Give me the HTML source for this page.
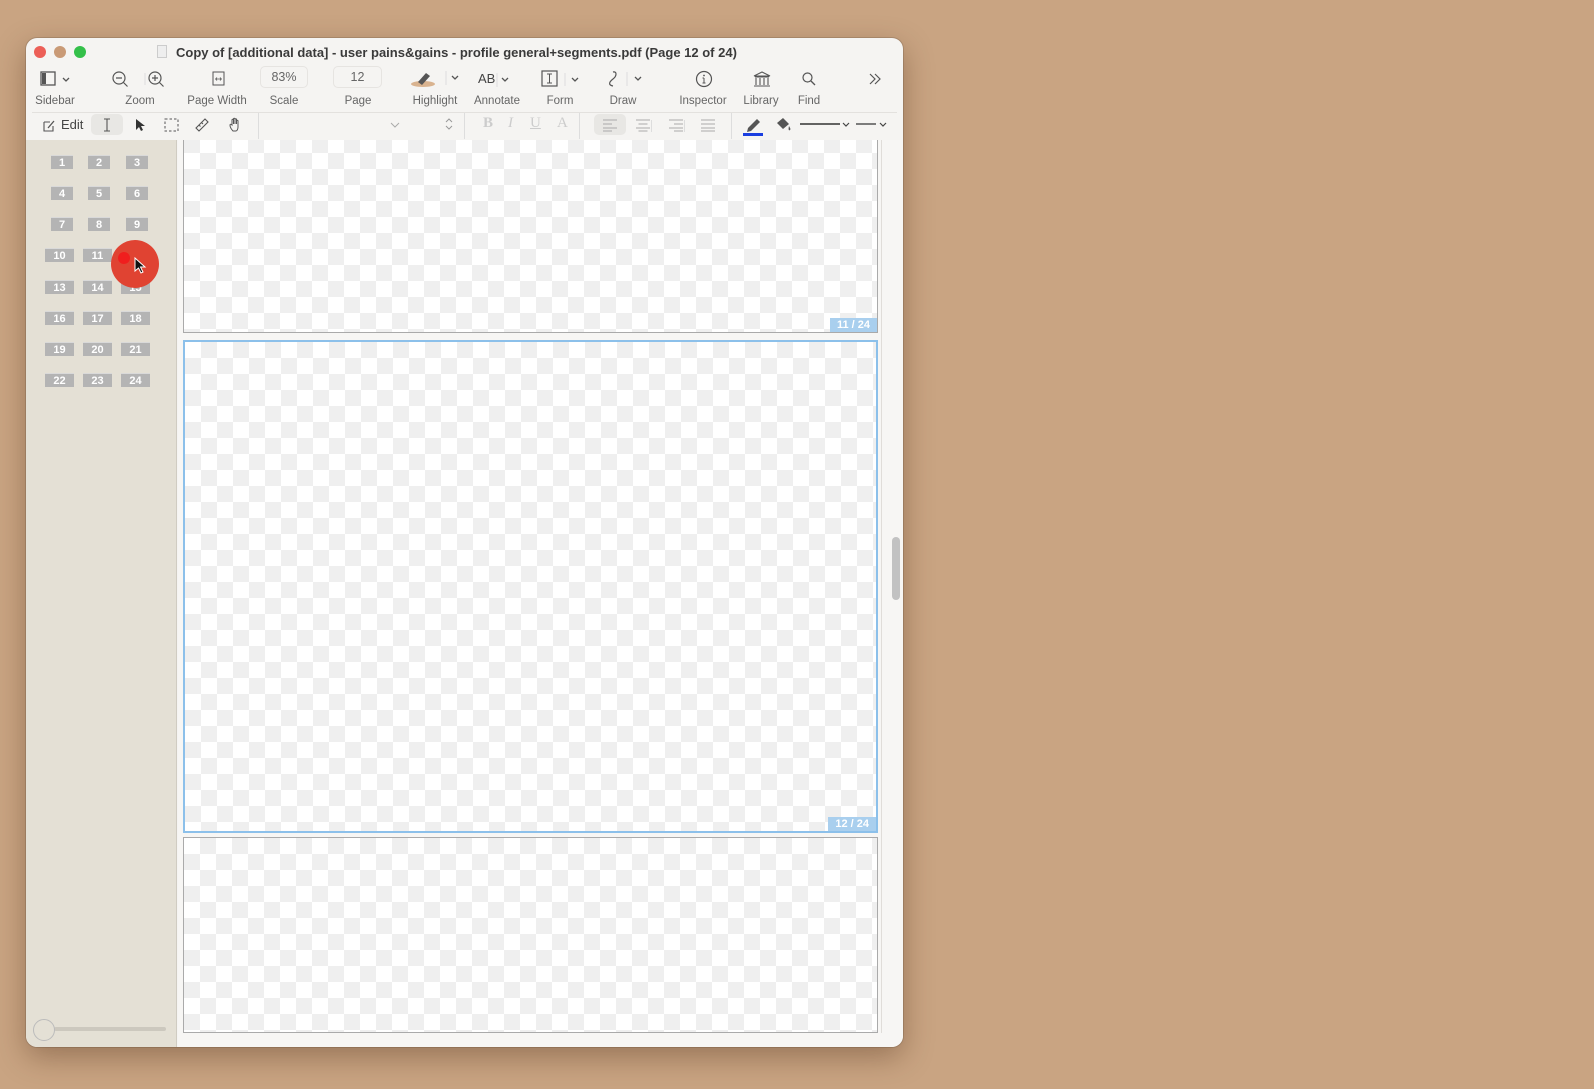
<!DOCTYPE html>
<html><head><meta charset="utf-8"><style>
*{margin:0;padding:0;box-sizing:border-box}
body{width:1594px;height:1089px;background:#c9a482;position:relative;overflow:hidden;font-family:"Liberation Sans",sans-serif}
.win{position:absolute;left:26px;top:38px;width:877px;height:1009px;background:#f5f4f2;border-radius:11px;overflow:hidden;box-shadow:0 10px 30px rgba(60,30,10,.35),0 0 0 1px rgba(0,0,0,.12)}
.a{position:absolute}
.lbl{position:absolute;top:57px;font-size:11.5px;color:#666;transform:translateX(-50%);white-space:nowrap}
.sidebar{position:absolute;left:0;top:102px;width:151px;height:907px;background:#e4e0d5;border-right:1px solid #d0ccc2}
.th{position:absolute;height:14px;background:#b4b4b4;color:#fff;font-size:11px;font-weight:bold;text-align:center;line-height:14px;border-top:1px solid #d9d9d9}
.content{position:absolute;left:152px;top:102px;width:725px;height:907px;overflow:hidden;background:#f7f6f4}
.page{position:absolute;left:5px;width:695px;background-color:#fff;background-image:linear-gradient(45deg,#efefef 25%,transparent 25%,transparent 75%,#efefef 75%),linear-gradient(45deg,#efefef 25%,transparent 25%,transparent 75%,#efefef 75%);background-size:32px 32px;background-position:0 0,16px 16px;border:1px solid #aaa}
.pl{position:absolute;right:0;bottom:0;background:#a9cfee;color:#fff;font-size:11px;font-weight:bold;padding:0 7px;height:14px;line-height:14px}
</style></head><body>
<div class="win">
 <div class="a" style="left:8px;top:8px;width:12px;height:12px;border-radius:50%;background:#ec5f57"></div>
 <div class="a" style="left:28px;top:8px;width:12px;height:12px;border-radius:50%;background:#c99a76"></div>
 <div class="a" style="left:48px;top:8px;width:12px;height:12px;border-radius:50%;background:#34c04a"></div>
 <div class="a" style="left:131px;top:7px;width:10px;height:13px;background:#eee;border:1px solid #ccc"></div>
 <div class="a" style="left:150px;top:7px;font-size:13px;font-weight:bold;color:#3a3a3a;white-space:nowrap">Copy of [additional data] - user pains&amp;gains - profile general+segments.pdf (Page 12 of 24)</div>

 <svg class="a" style="left:14px;top:32px" width="36" height="18"><rect x="1" y="2" width="14" height="13" fill="none" stroke="#555" stroke-width="1.3"/><rect x="2" y="3" width="4" height="11" fill="#555"/><path d="M23 8l3 3 3-3" fill="none" stroke="#555" stroke-width="1.3"/></svg>
 <svg class="a" style="left:85px;top:32px" width="60" height="18"><circle cx="8" cy="8" r="6" fill="none" stroke="#555" stroke-width="1.2"/><path d="M5 8h6M12.5 12.5l4 4" stroke="#555" stroke-width="1.2"/><path d="M34 3v12" stroke="#ddd"/><circle cx="44" cy="8" r="6" fill="none" stroke="#555" stroke-width="1.2"/><path d="M41 8h6M44 5v6M48.5 12.5l4 4" stroke="#555" stroke-width="1.2"/></svg>
 <svg class="a" style="left:186px;top:33px" width="14" height="16"><rect x="1" y="1" width="11" height="13" fill="none" stroke="#555"/><path d="M3.5 8h6M3.5 8l1.5-1.5M3.5 8l1.5 1.5M9.5 8l-1.5-1.5M9.5 8l-1.5 1.5" stroke="#555" stroke-width=".8"/></svg>
 <div class="a" style="left:234px;top:28px;width:48px;height:22px;border:1px solid #e6e4e1;border-radius:5px;font-size:12.5px;color:#666;text-align:center;line-height:20px">83%</div>
 <div class="a" style="left:307px;top:28px;width:49px;height:22px;border:1px solid #e6e4e1;border-radius:5px;font-size:12.5px;color:#666;text-align:center;line-height:20px">12</div>
 <svg class="a" style="left:384px;top:30px" width="60" height="20"><ellipse cx="13" cy="16" rx="12" ry="3" fill="#d9b38f"/><path d="M8 14l8-9 4 3-8 9z" fill="#555"/><path d="M36 3v14" stroke="#ddd"/><path d="M42 8l3 3 3-3" fill="none" stroke="#555" stroke-width="1.3"/></svg>
 <div class="a" style="left:452px;top:33px;font-size:13px;color:#444">AB</div>
 <svg class="a" style="left:466px;top:32px" width="20" height="18"><path d="M5 3v14" stroke="#ddd"/><path d="M10 8l3 3 3-3" fill="none" stroke="#555" stroke-width="1.3"/></svg>
 <svg class="a" style="left:515px;top:32px" width="42" height="18"><rect x="1" y="1" width="15" height="15" fill="none" stroke="#555" stroke-width="1.2"/><path d="M6 4h5M8.5 4v9M6 13h5" stroke="#555"/><path d="M24 3v13" stroke="#ddd"/><path d="M31 8l3 3 3-3" fill="none" stroke="#555" stroke-width="1.3"/></svg>
 <svg class="a" style="left:576px;top:31px" width="46" height="20"><path d="M11 3c4-1 4 4 0 7s-5 6 0 7" fill="none" stroke="#555" stroke-width="1.2"/><path d="M25 3v14" stroke="#ddd"/><path d="M33 8l3 3 3-3" fill="none" stroke="#555" stroke-width="1.3"/></svg>
 <svg class="a" style="left:669px;top:32px" width="18" height="18"><circle cx="9" cy="9" r="7.5" fill="none" stroke="#555" stroke-width="1.2"/><path d="M9 8v5M7.5 13h3M7.5 8h1.5" stroke="#555"/><circle cx="9" cy="5.5" r=".9" fill="#555"/></svg>
 <svg class="a" style="left:726px;top:32px" width="20" height="18"><path d="M2 6l8-4 8 4zM3 7h14M4 8v7M8 8v7M12 8v7M16 8v7M2 16h16" fill="none" stroke="#555" stroke-width="1.1"/></svg>
 <svg class="a" style="left:775px;top:33px" width="16" height="16"><circle cx="6.5" cy="6.5" r="4.5" fill="none" stroke="#555" stroke-width="1.2"/><path d="M10 10l4 4" stroke="#555" stroke-width="1.3"/></svg>
 <svg class="a" style="left:842px;top:34px" width="14" height="14"><path d="M2 2l5 5-5 5M7 2l5 5-5 5" fill="none" stroke="#555" stroke-width="1.2"/></svg>

 <div class="lbl" style="left:29px">Sidebar</div>
 <div class="lbl" style="left:114px">Zoom</div>
 <div class="lbl" style="left:191px">Page Width</div>
 <div class="lbl" style="left:258px">Scale</div>
 <div class="lbl" style="left:332px">Page</div>
 <div class="lbl" style="left:409px">Highlight</div>
 <div class="lbl" style="left:471px">Annotate</div>
 <div class="lbl" style="left:534px">Form</div>
 <div class="lbl" style="left:597px">Draw</div>
 <div class="lbl" style="left:677px">Inspector</div>
 <div class="lbl" style="left:735px">Library</div>
 <div class="lbl" style="left:783px">Find</div>

 <div class="a" style="left:6px;top:74px;width:865px;height:1px;background:#e3e1de"></div>
 <svg class="a" style="left:15px;top:80px" width="16" height="16"><path d="M3 4h6M3 4v9h9V8" fill="none" stroke="#555" stroke-width="1.1"/><path d="M7 10l6-7" stroke="#555" stroke-width="1.3"/></svg>
 <div class="a" style="left:35px;top:79px;font-size:13px;color:#444">Edit</div>
 <div class="a" style="left:65px;top:76px;width:32px;height:21px;background:#e8e7e4;border-radius:5px"></div>
 <svg class="a" style="left:75px;top:79px" width="12" height="16"><path d="M3 2h6M6 2v12M3 14h6" stroke="#555" stroke-width="1.1"/></svg>
 <svg class="a" style="left:108px;top:80px" width="12" height="14"><path d="M2 1v11l3-3 2 4 2-1-2-4h4z" fill="#333"/></svg>
 <svg class="a" style="left:138px;top:80px" width="16" height="14"><rect x="1" y="1" width="13" height="12" fill="none" stroke="#555" stroke-dasharray="2.5 2"/></svg>
 <svg class="a" style="left:168px;top:79px" width="16" height="16"><path d="M2 11l9-9 3 3-9 9z M5 8l1.5 1.5M7.5 5.5L9 7" fill="none" stroke="#555" stroke-width="1.1"/></svg>
 <svg class="a" style="left:202px;top:79px" width="16" height="16"><path d="M5 14c-2-2-3-4-3-6 0-1 1-1 2 0V3c0-1 1.5-1 1.5 0v4V2c0-1 1.5-1 1.5 0v5V2.5c0-1 1.5-1 1.5 0V7V4c0-1 1.5-1 1.5 0v6c0 2-1 4-2 4z" fill="none" stroke="#555" stroke-width="1"/></svg>
 <div class="a" style="left:232px;top:75px;width:1px;height:26px;background:#ddd"></div>
 <svg class="a" style="left:364px;top:83px" width="10" height="8"><path d="M1 2l4 4 4-4" fill="none" stroke="#aaa"/></svg>
 <svg class="a" style="left:419px;top:80px" width="8" height="12"><path d="M1 4l3-3 3 3M1 8l3 3 3-3" fill="none" stroke="#999"/></svg>
 <div class="a" style="left:438px;top:75px;width:1px;height:26px;background:#ddd"></div>
 <div class="a" style="left:457px;top:77px;font-size:15px;font-weight:bold;color:#ccc;font-family:'Liberation Serif',serif">B</div>
 <div class="a" style="left:482px;top:77px;font-size:15px;font-style:italic;color:#ccc;font-family:'Liberation Serif',serif">I</div>
 <div class="a" style="left:504px;top:77px;font-size:15px;text-decoration:underline;color:#ccc;font-family:'Liberation Serif',serif">U</div>
 <div class="a" style="left:531px;top:77px;font-size:15px;color:#ccc;font-family:'Liberation Serif',serif">A</div>
 <div class="a" style="left:553px;top:75px;width:1px;height:26px;background:#ddd"></div>
 <div class="a" style="left:568px;top:76px;width:32px;height:21px;background:#e8e7e4;border-radius:5px"></div>
 <svg class="a" style="left:576px;top:80px" width="120" height="14"><g stroke="#aaa" stroke-width="1.1"><path d="M1 2h14M1 6h9M1 10h14M1 13h9"/><path d="M34 2h14M36.5 6h9M34 10h14M36.5 13h9"/><path d="M67 2h14M72 6h9M67 10h14M72 13h9"/><path d="M99 2h14M99 6h14M99 10h14M99 13h14"/></g></svg>
 <div class="a" style="left:625px;top:82px;width:1px;height:12px;background:#ddd"></div>
 <div class="a" style="left:658px;top:82px;width:1px;height:12px;background:#ddd"></div>
 <div class="a" style="left:705px;top:75px;width:1px;height:26px;background:#ddd"></div>
 <svg class="a" style="left:717px;top:78px" width="24" height="20"><path d="M5 12l9-9 3 3-9 9-4 1z" fill="#555"/><rect x="0" y="17" width="20" height="3" fill="#1a3ee0"/></svg>
 <svg class="a" style="left:748px;top:79px" width="20" height="16"><path d="M3 6l6-5 6 6-6 5z" fill="#555"/><path d="M15 9c1 2 2 3 1 4s-2 0-1-4" fill="#555"/></svg>
 <svg class="a" style="left:774px;top:82px" width="110" height="10"><path d="M0 4h40" stroke="#333" stroke-width="1.6"/><path d="M43 3l3 3 3-3" fill="none" stroke="#444" stroke-width="1.2"/><path d="M56 4h20" stroke="#555" stroke-width="1.6"/><path d="M80 3l3 3 3-3" fill="none" stroke="#444" stroke-width="1.2"/></svg>

 <div class="sidebar">
  <div class="th" style="left:25px;top:15px;width:22px">1</div>
  <div class="th" style="left:62px;top:15px;width:22px">2</div>
  <div class="th" style="left:100px;top:15px;width:22px">3</div>
  <div class="th" style="left:25px;top:46px;width:22px">4</div>
  <div class="th" style="left:62px;top:46px;width:22px">5</div>
  <div class="th" style="left:100px;top:46px;width:22px">6</div>
  <div class="th" style="left:25px;top:77px;width:22px">7</div>
  <div class="th" style="left:62px;top:77px;width:22px">8</div>
  <div class="th" style="left:100px;top:77px;width:22px">9</div>
  <div class="th" style="left:19px;top:108px;width:29px">10</div>
  <div class="th" style="left:57px;top:108px;width:29px">11</div>
  <div class="th" style="left:95px;top:108px;width:29px">12</div>
  <div class="th" style="left:19px;top:140px;width:29px">13</div>
  <div class="th" style="left:57px;top:140px;width:29px">14</div>
  <div class="th" style="left:95px;top:140px;width:29px">15</div>
  <div class="th" style="left:19px;top:171px;width:29px">16</div>
  <div class="th" style="left:57px;top:171px;width:29px">17</div>
  <div class="th" style="left:95px;top:171px;width:29px">18</div>
  <div class="th" style="left:19px;top:202px;width:29px">19</div>
  <div class="th" style="left:57px;top:202px;width:29px">20</div>
  <div class="th" style="left:95px;top:202px;width:29px">21</div>
  <div class="th" style="left:19px;top:233px;width:29px">22</div>
  <div class="th" style="left:57px;top:233px;width:29px">23</div>
  <div class="th" style="left:95px;top:233px;width:29px">24</div>
  <div class="a" style="left:85px;top:100px;width:48px;height:48px;border-radius:50%;background:#e04332"></div>
  <div class="a" style="left:92px;top:112px;width:12px;height:12px;border-radius:50%;background:#f01e1e"></div>
  <svg class="a" style="left:107px;top:117px" width="14" height="18"><path d="M2 1v13l3.5-3 2.5 5 2-1-2.5-5H12z" fill="#111" stroke="#fff" stroke-width="1"/></svg>
  <div class="a" style="left:28px;top:887px;width:112px;height:4px;background:#ccc8be;border-radius:2px"></div>
  <div class="a" style="left:7px;top:879px;width:22px;height:22px;border-radius:50%;background:#e4e0d5;border:1px solid #bbb"></div>
 </div>

 <div class="content">
  <div class="page" style="top:-20px;height:213px"><div class="pl">11 / 24</div></div>
  <div class="page" style="top:200px;height:493px;border:2px solid #8cc0ea"><div class="pl">12 / 24</div></div>
  <div class="page" style="top:697px;height:196px"></div>
  <div class="a" style="left:703px;top:0;width:1px;height:893px;background:#e0ddd9"></div>
  <div class="a" style="left:714px;top:397px;width:8px;height:63px;border-radius:4px;background:#c2c2c2"></div>
 </div>
</div>
</body></html>
